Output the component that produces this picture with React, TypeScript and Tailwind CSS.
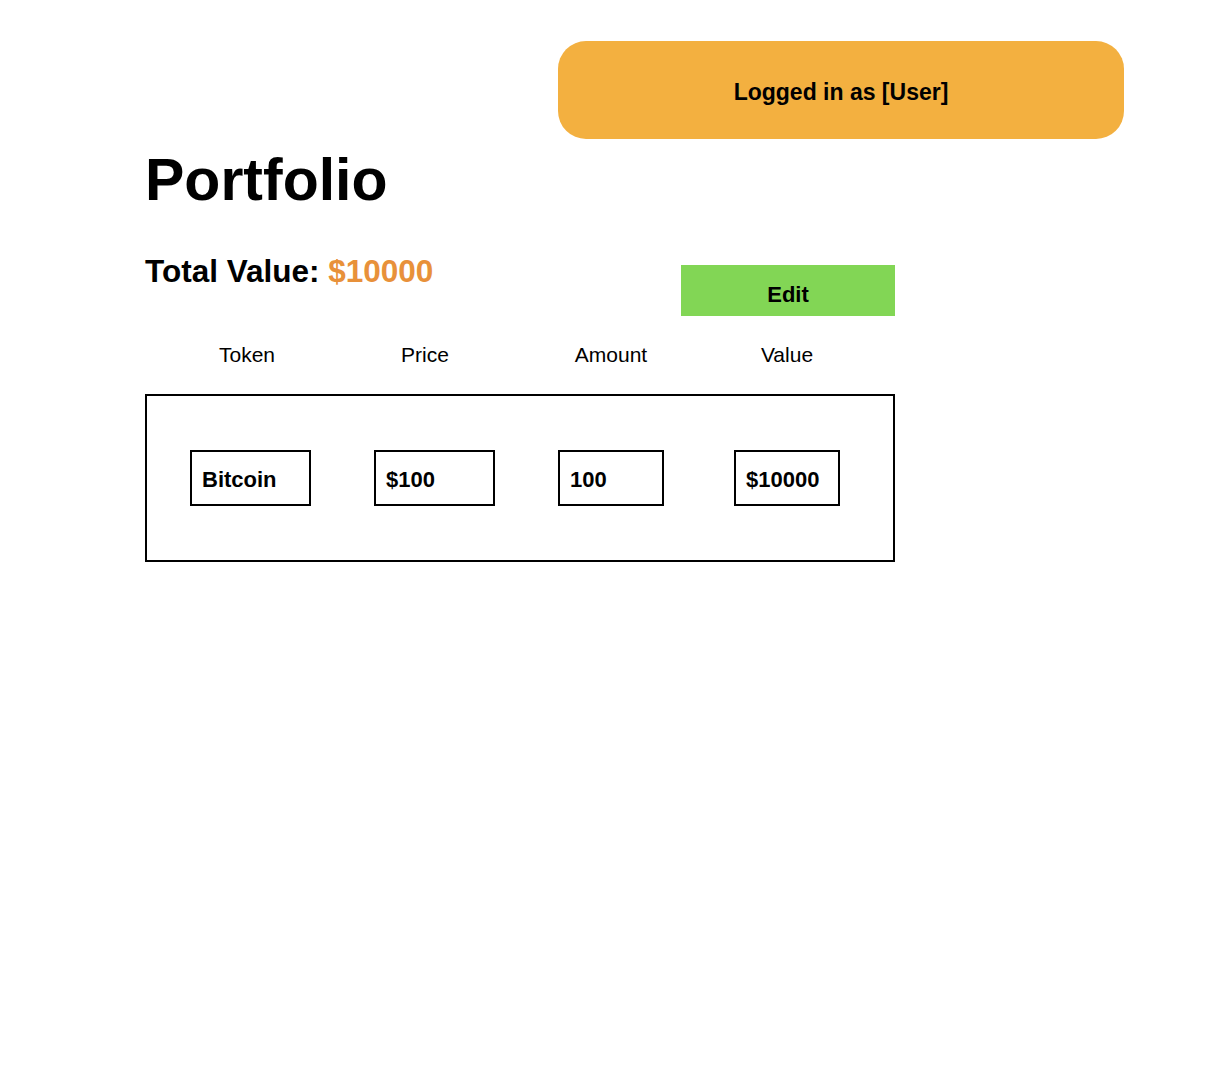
const holdings = [
  { token: 'Bitcoin', price: '$100', amount: '100', value: '$10000' },
];

const headers = [
  { label: 'Token', width: 'w-[204px]' },
  { label: 'Price', width: 'w-[152px]' },
  { label: 'Amount', width: 'w-[220px]' },
  { label: 'Value', width: 'w-[132px]' },
];

function Cell({ text, className }: { text: string; className: string }) {
  return (
    <div className={`h-[56px] border-2 border-black flex items-center pl-[10px] pt-[3px] text-[22px] font-bold leading-none ${className}`}>
      {text}
    </div>
  );
}

export default function App() {
  return (
    <div className="min-h-screen bg-white text-black font-['Liberation_Sans',Arial,sans-serif]">
      <div className="flex justify-end pt-[41px] pr-[82px]">
        <div className="w-[566px] h-[98px] rounded-[28px] bg-[#f3b040] flex items-center justify-center pt-[4px] text-[23px] font-bold">
          Logged in as [User]
        </div>
      </div>

      <div className="pl-[145px] w-[750px] box-content">
        <h1 className="mt-[12px] text-[59px] font-bold leading-none">Portfolio</h1>

        <div className="mt-[46px] flex justify-between items-start">
          <p className="text-[31.5px] font-bold leading-none">
            Total Value: <span className="text-[#e8913a]">$10000</span>
          </p>
          <button className="mt-[9px] w-[214px] h-[51px] bg-[#82d655] flex justify-center items-start pt-[19px] text-[22px] font-bold leading-none">
            Edit
          </button>
        </div>

        <div className="mt-[28px] flex text-[21px] leading-none">
          {headers.map((h) => (
            <div key={h.label} className={`${h.width} text-center`}>
              {h.label}
            </div>
          ))}
        </div>

        <div className="mt-[29px] w-[750px] h-[168px] border-2 border-black flex flex-col justify-center pl-[43px]">
          {holdings.map((row) => (
            <div key={row.token} className="flex">
              <Cell text={row.token} className="w-[121px]" />
              <Cell text={row.price} className="w-[121px] ml-[63px]" />
              <Cell text={row.amount} className="w-[106px] ml-[63px]" />
              <Cell text={row.value} className="w-[106px] ml-[70px]" />
            </div>
          ))}
        </div>
      </div>
    </div>
  );
}
